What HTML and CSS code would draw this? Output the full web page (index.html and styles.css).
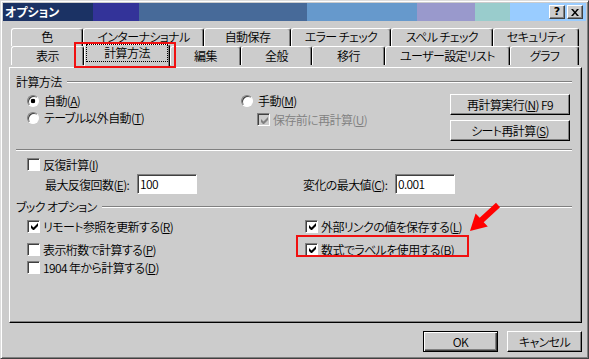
FILE: index.html
```html
<!DOCTYPE html>
<html lang="ja">
  <head>
    <meta charset="UTF-8" />
    <link rel="stylesheet" href="styles.css">
    <title>オプション</title>
  </head>
  <body>
  <div class="window">
    <div class="titlebar">
      <span class="title">オプション</span>
      <span class="cap-btn help">?</span>
      <span class="cap-btn close"><svg width="8" height="7" viewBox="0 0 8 7"><path d="M0 0h2l2 2.4L6 0h2L5 3.5 8 7H6L4 4.6 2 7H0l3-3.5z"/></svg></span>
    </div>

    <!-- two rows of tabs, the front one touches the panel -->
    <div class="tabs">
      <div class="tab-row back">
        <div class="tab t-color">色</div>
        <div class="tab t-intl">インターナショナル</div>
        <div class="tab t-save">自動保存</div>
        <div class="tab t-error">エラー チェック</div>
        <div class="tab t-spell">スペル チェック</div>
        <div class="tab t-security">セキュリティ</div>
      </div>
      <div class="tab-row front">
        <div class="tab t-view">表示</div>
        <div class="tab t-calc selected"><span class="focus">計算方法</span></div>
        <div class="tab t-edit">編集</div>
        <div class="tab t-general">全般</div>
        <div class="tab t-move">移行</div>
        <div class="tab t-lists">ユーザー設定リスト</div>
        <div class="tab t-chart">グラフ</div>
      </div>
    </div>

    <div class="panel">
      <div class="group-head"><span>計算方法</span><i class="etch"></i></div>
      <div class="calc">
        <div class="calc-col left">
          <label class="opt"><span class="radio on"></span>自動(<u>A</u>)</label>
          <label class="opt"><span class="radio"></span>テーブル以外自動(<u>T</u>)</label>
        </div>
        <div class="calc-col mid">
          <label class="opt"><span class="radio"></span>手動(<u>M</u>)</label>
          <label class="opt sub disabled"><span class="check on"><svg width="7" height="7" viewBox="0 0 7 7"><path d="M0 2v3l2 2h1l4-4V0L2.5 4.5z"/></svg></span>保存前に再計算(<u>U</u>)</label>
        </div>
        <div class="calc-col buttons">
          <span class="btn wide">再計算実行(<u>N</u>) F9</span>
          <span class="btn wide">シート再計算(<u>S</u>)</span>
        </div>
      </div>
      <i class="etch rule"></i>

      <label class="opt iter"><span class="check"></span>反復計算(<u>I</u>)</label>
      <div class="limits">
        <div class="limit"><span class="limit-label">最大反復回数(<u>E</u>):</span><span class="field">100</span></div>
        <div class="limit"><span class="limit-label">変化の最大値(<u>C</u>):</span><span class="field">0.001</span></div>
      </div>

      <div class="group-head second"><span>ブック オプション</span><i class="etch"></i></div>
      <div class="book">
        <div class="book-col">
          <label class="opt"><span class="check on"><svg width="7" height="7" viewBox="0 0 7 7"><path d="M0 2v3l2 2h1l4-4V0L2.5 4.5z"/></svg></span>リモート参照を更新する(<u>R</u>)</label>
          <label class="opt"><span class="check"></span>表示桁数で計算する(<u>P</u>)</label>
          <label class="opt tight"><span class="check"></span>1904 年から計算する(<u>D</u>)</label>
        </div>
        <div class="book-col">
          <label class="opt"><span class="check on"><svg width="7" height="7" viewBox="0 0 7 7"><path d="M0 2v3l2 2h1l4-4V0L2.5 4.5z"/></svg></span>外部リンクの値を保存する(<u>L</u>)</label>
          <label class="opt"><span class="check on"><svg width="7" height="7" viewBox="0 0 7 7"><path d="M0 2v3l2 2h1l4-4V0L2.5 4.5z"/></svg></span>数式でラベルを使用する(<u>B</u>)</label>
        </div>
      </div>
    </div>

    <div class="footer">
      <span class="btn default">OK</span>
      <span class="btn">キャンセル</span>
    </div>

    <!-- red annotations drawn over the dialog -->
    <div class="mark mark-tab"></div>
    <div class="mark mark-option"></div>
    <svg class="arrow" width="45" height="45" viewBox="0 0 45 45"><polygon points="36,7.8 19.7,22.8 15.6,18.4 10,36 27.8,31.6 23.7,27.2 40,12.2"/></svg>
  </div>
  </body>
</html>
```

FILE: styles.css
```css
* {
  box-sizing: border-box;
}
html, body {
  margin: 0;
  padding: 0;
}
body {
  font-family: "Noto Sans CJK JP", "Noto Sans", sans-serif;
  font-size: 12px;
  font-weight: 350;
  letter-spacing: -0.6px;
  font-feature-settings: "palt";
  color: #000;
  background: #cccccc;
}

/*===============================*/
/* Window frame and caption      */
/*===============================*/
.window {
  position: relative;
  width: 589px;
  height: 359px;
  padding: 2px;
  background: #cccccc;
  border: 1px solid;
  border-color: #dddddd #404040 #404040 #dddddd;
  box-shadow: inset 1px 1px #ffffff, inset -1px -1px #808080;
}
.titlebar {
  display: flex;
  align-items: center;
  height: 18px;
  padding: 0 3px 0 2px;
  gap: 2px;
  background: linear-gradient(to right,
    #1b3264 0 90px,
    #333399 90px 136px,
    #476a99 136px 304px,
    #6699cc 304px 414px,
    #9999cc 414px 472px,
    #99cccc 472px 507px,
    #99ccff 507px);
}
.title {
  flex: 1;
  color: #fff;
  font-weight: bold;
  letter-spacing: 0;
  line-height: 18px;
}
.cap-btn {
  display: flex;
  align-items: center;
  justify-content: center;
  width: 16px;
  height: 14px;
  background: #cccccc;
  border: 1px solid;
  border-color: #fff #404040 #404040 #fff;
  box-shadow: inset -1px -1px #808080;
  font-family: "DejaVu Sans", sans-serif;
  font-weight: bold;
  font-size: 11px;
  letter-spacing: 0;
  line-height: 12px;
}

/*===============================*/
/* Tabs                          */
/*===============================*/
.tabs {
  margin-top: 7px;
  padding-left: 8px;
}
.tab-row {
  display: flex;
  align-items: flex-start;
}
.tab {
  height: 18px;
  border: 1px solid;
  border-bottom: none;
  border-color: #fff #000 transparent #fff;
  border-radius: 3px 3px 0 0;
  box-shadow: inset -1px 0 #808080;
  text-align: center;
  white-space: nowrap;
  line-height: 15px;
}
.front .tab {
  height: 19px;
  line-height: 17px;
}
.front .tab.selected {
  position: relative;
  z-index: 1;
  height: 23px;
  margin-top: -2px;
  padding: 0 2px;
  background: #cccccc;
}
.focus {
  display: block;
  height: 16px;
  line-height: 16px;
  outline: 1px dotted #000;
}
.t-color { width: 72px; }
.t-intl { width: 121px; }
.t-save { width: 87px; }
.t-error { width: 100px; }
.t-spell { width: 102px; }
.t-security { width: 86px; }
.t-view { width: 73px; }
.t-calc { width: 86px; }
.t-edit { width: 71px; }
.t-general { width: 71px; }
.t-move { width: 73px; }
.t-lists { width: 125px; }
.t-chart { width: 69px; }

/*===============================*/
/* Panel                         */
/*===============================*/
.panel {
  margin-left: 6px;
  width: 573px;
  height: 256px;
  border: 1px solid;
  border-color: #fff #000 #000 #fff;
  box-shadow: inset -1px -1px #808080;
}
.etch {
  display: block;
  height: 2px;
  border-top: 1px solid #808080;
  border-bottom: 1px solid #fff;
}
.group-head {
  display: flex;
  align-items: center;
  height: 14px;
  margin: 7px 9px 0 6px;
  line-height: 14px;
}
.group-head.second {
  margin-top: 6px;
}
.group-head .etch {
  flex: 1;
  margin-left: 5px;
}
.etch.rule {
  margin: 8px 9px 0 6px;
}

.opt {
  display: flex;
  align-items: center;
  height: 17px;
  white-space: nowrap;
}
.radio {
  width: 12px;
  height: 12px;
  margin-right: 5px;
  border-radius: 50%;
  background: #fff;
  border: 1px solid;
  border-color: #808080 #fff #fff #808080;
  box-shadow: inset 1px 1px #404040;
}
.radio.on {
  background: radial-gradient(circle, #000 0 2px, #fff 2.6px);
}
.check {
  display: flex;
  align-items: center;
  justify-content: center;
  width: 13px;
  height: 13px;
  margin-right: 3px;
  padding: 1px 0 0 1px;
  background: #fff;
  border: 1px solid;
  border-color: #808080 #fff #fff #808080;
  box-shadow: inset 1px 1px #404040;
}
.check svg {
  fill: #000;
}
.disabled {
  color: #808080;
}
.disabled .check {
  background: #cccccc;
}
.disabled .check svg {
  fill: #808080;
}

.calc {
  display: flex;
  margin-top: 3px;
  padding-left: 17px;
}
.calc-col.left {
  width: 214px;
}
.calc-col.mid {
  width: 209px;
}
.opt.sub {
  margin-top: 2px;
  padding-left: 16px;
}
.calc-col.buttons {
  display: flex;
  flex-direction: column;
  gap: 5px;
  margin-top: 2px;
}

.btn {
  display: flex;
  align-items: center;
  justify-content: center;
  width: 75px;
  height: 21px;
  background: #cccccc;
  border: 1px solid;
  border-color: #fff #000 #000 #fff;
  box-shadow: inset -1px -1px #808080;
  white-space: nowrap;
}
.btn.wide {
  width: 120px;
}
.btn.default {
  border-color: #000;
  box-shadow: inset 1px 1px #fff, inset -1px -1px #404040, inset -2px -2px #808080;
}

.opt.iter {
  height: 16px;
  margin-top: 5px;
  padding-left: 17px;
}
.limits {
  display: flex;
  align-items: center;
  height: 20px;
  margin-top: 2px;
  padding-left: 35px;
}
.limit {
  display: flex;
  align-items: center;
}
.limit:first-child {
  width: 258px;
}
.limit-label {
  width: 92px;
  white-space: nowrap;
}
.field {
  width: 60px;
  height: 20px;
  padding-left: 2px;
  background: #fff;
  border: 1px solid;
  border-color: #808080 #fff #fff #808080;
  box-shadow: inset 1px 1px #404040;
  line-height: 18px;
}

.book {
  display: flex;
  margin-top: 4px;
  padding-left: 17px;
}
.book-col {
  display: flex;
  flex-direction: column;
}
.book-col:first-child {
  width: 278px;
}
.book .opt {
  height: 16px;
}
.book .opt + .opt {
  margin-top: 7px;
}
.book .opt.tight {
  margin-top: 2px;
}

/*===============================*/
/* Footer buttons                */
/*===============================*/
.footer {
  display: flex;
  justify-content: flex-end;
  gap: 9px;
  margin-top: 8px;
  padding-right: 4px;
}

/*===============================*/
/* Red annotations               */
/*===============================*/
.mark {
  position: absolute;
  border: 2px solid #f01010;
  z-index: 3;
}
.mark-tab {
  left: 73px;
  top: 41px;
  width: 102px;
  height: 26px;
}
.mark-option {
  left: 295px;
  top: 234px;
  width: 173px;
  height: 22px;
}
.arrow {
  position: absolute;
  left: 459px;
  top: 194px;
  z-index: 3;
  fill: #ff0000;
}
```
